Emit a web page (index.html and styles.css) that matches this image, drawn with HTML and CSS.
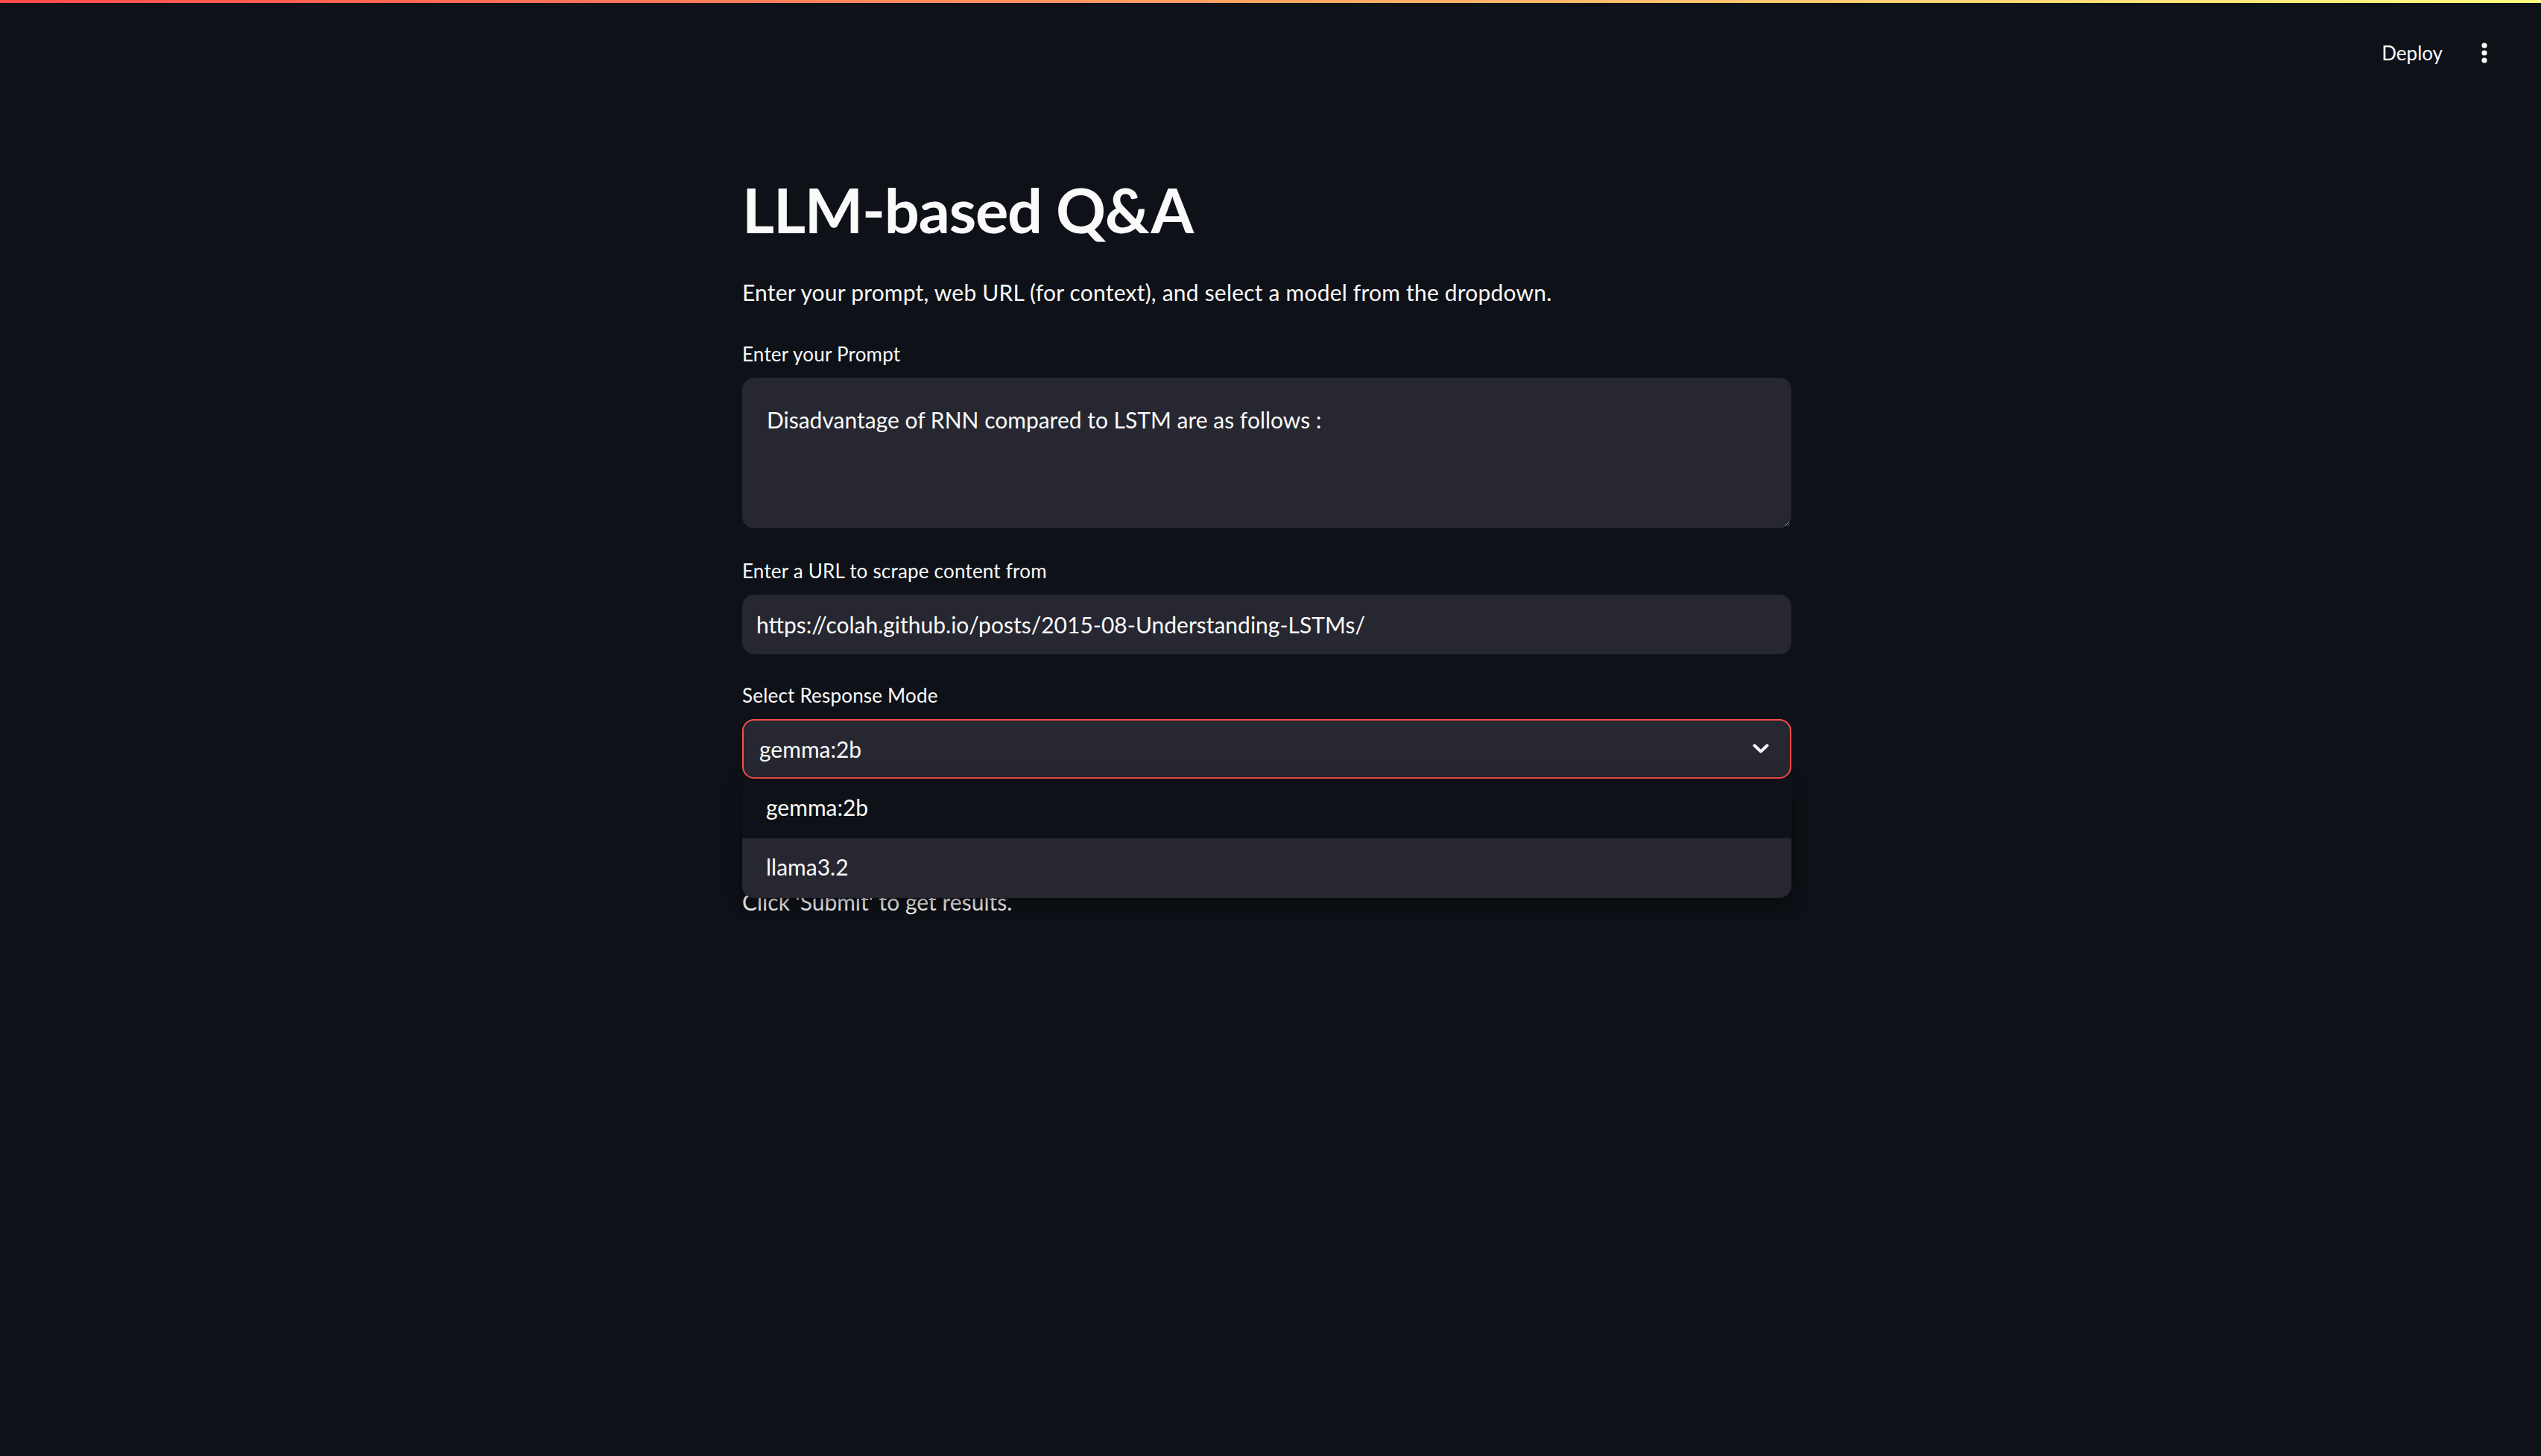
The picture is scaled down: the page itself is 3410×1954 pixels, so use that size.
FILE: index.html
```html
<!DOCTYPE html>
<html lang="en">
<head>
<meta charset="utf-8">
<title>LLM-based Q&amp;A</title>
<link rel="stylesheet" href="styles.css">
</head>
<body>
<div class="decoration"></div>
<header class="app-header">
  <button class="deploy-btn">Deploy</button>
  <button class="menu-btn" aria-label="Main menu">
    <svg width="10" height="30" viewBox="0 0 10 30"><circle cx="5" cy="5" r="3.6" fill="#fafafa"/><circle cx="5" cy="15" r="3.6" fill="#fafafa"/><circle cx="5" cy="25" r="3.6" fill="#fafafa"/></svg>
  </button>
</header>
<main class="app-main">
  <div class="block">
    <h1 class="title">LLM-based Q&amp;A</h1>
    <p class="intro">Enter your prompt, web URL (for context), and select a model from the dropdown.</p>

    <div class="widget">
      <label class="widget-label">Enter your Prompt</label>
      <textarea class="textarea">Disadvantage of RNN compared to LSTM are as follows :</textarea>
    </div>

    <div class="widget">
      <label class="widget-label">Enter a URL to scrape content from</label>
      <input class="text-input" type="text" value="https://colah.github.io/posts/2015-08-Understanding-LSTMs/">
    </div>

    <div class="widget widget-select">
      <label class="widget-label">Select Response Mode</label>
      <div class="select-wrap">
        <div class="select">
          <span class="select-value">gemma:2b</span>
          <svg class="chevron" width="22" height="14" viewBox="0 0 22 14"><polyline points="2.5,2.5 11,10.5 19.5,2.5" fill="none" stroke="#fafafa" stroke-width="4" stroke-linecap="round" stroke-linejoin="round"/></svg>
        </div>
        <ul class="menu">
          <li class="menu-item">gemma:2b</li>
          <li class="menu-item active">llama3.2</li>
        </ul>
      </div>
    </div>

    <button class="submit-btn">Submit</button>
    <p class="hint">Click 'Submit' to get results.</p>
  </div>
</main>
</body>
</html>
```

FILE: styles.css
```css
html, body {
  margin: 0;
  padding: 0;
  background: #0e1117;
  color: #fafafa;
  font-family: "Lato", "Open Sans", sans-serif;
}

body {
  min-height: 1954px;
  overflow: hidden;
}

.decoration {
  height: 4px;
  background-image: linear-gradient(90deg, #ff4b4b, #fffd80);
}

.app-header {
  height: 134px;
  display: flex;
  justify-content: flex-end;
  align-items: center;
  gap: 24px;
  padding-right: 44px;
}

.deploy-btn {
  background: none;
  border: none;
  color: #fafafa;
  font-family: "Lato", sans-serif;
  font-size: 26px;
  padding: 0;
}

.menu-btn {
  background: none;
  border: none;
  width: 64px;
  height: 64px;
  display: flex;
  align-items: center;
  justify-content: center;
  padding: 0;
}

.app-main {
  padding-top: 94px;
  padding-right: 10px;
}

.block {
  width: 1408px;
  margin: 0 auto;
}

.title {
  margin: 0;
  font-size: 83px;
  font-weight: 700;
  line-height: 1.2;
  letter-spacing: -1.2px;
}

.intro {
  margin: 36px 0 0;
  font-size: 30px;
  line-height: 48px;
  letter-spacing: 0.2px;
}

.widget {
  margin-top: 38px;
  display: flex;
  flex-direction: column;
  gap: 11px;
}

.widget + .widget {
  margin-top: 36px;
}

.widget + .widget-select {
  margin-top: 34px;
}

.widget-label {
  font-size: 26px;
  line-height: 42px;
  letter-spacing: 0.2px;
}

.textarea {
  box-sizing: border-box;
  height: 202px;
  width: 100%;
  background: #262730;
  color: #fafafa;
  border: 2px solid #262730;
  border-radius: 16px;
  padding: 30px 31px;
  font-family: "Lato", sans-serif;
  font-size: 30px;
  line-height: 48px;
  resize: vertical;
  outline: none;
  color-scheme: dark;
}

.text-input {
  box-sizing: border-box;
  height: 80px;
  width: 100%;
  background: #262730;
  color: #fafafa;
  border: 2px solid #262730;
  border-radius: 16px;
  padding: 0 17px;
  font-family: "Lato", sans-serif;
  font-size: 30px;
  outline: none;
}

.select-wrap {
  position: relative;
}

.select {
  box-sizing: border-box;
  height: 80px;
  background: #262730;
  border: 2px solid #ff4b4b;
  border-radius: 16px;
  display: flex;
  align-items: center;
  justify-content: space-between;
  padding: 0 28px 0 21px;
  font-size: 30px;
}

.chevron {
  display: block;
}

.menu {
  position: absolute;
  top: 100%;
  left: 0;
  right: 0;
  margin: 0;
  padding: 0;
  list-style: none;
  background: #0e1117;
  border-radius: 0 0 16px 16px;
  box-shadow: 0 8px 24px rgba(0, 0, 0, 0.45), 0 0 2px rgba(255, 255, 255, 0.06);
  overflow: hidden;
  z-index: 5;
}

.menu-item {
  box-sizing: border-box;
  height: 80px;
  display: flex;
  align-items: center;
  padding: 0 0 3px 32px;
  font-size: 30px;
}

.menu-item.active {
  background: #262730;
}

.submit-btn {
  margin-top: 32px;
  height: 76px;
  padding: 0 24px;
  background: #0e1117;
  color: #fafafa;
  border: 2px solid rgba(250, 250, 250, 0.2);
  border-radius: 16px;
  font-family: "Lato", sans-serif;
  font-size: 30px;
}

.hint {
  margin: 33px 0 0;
  font-size: 30px;
  line-height: 48px;
  color: #fafafa;
}
```
